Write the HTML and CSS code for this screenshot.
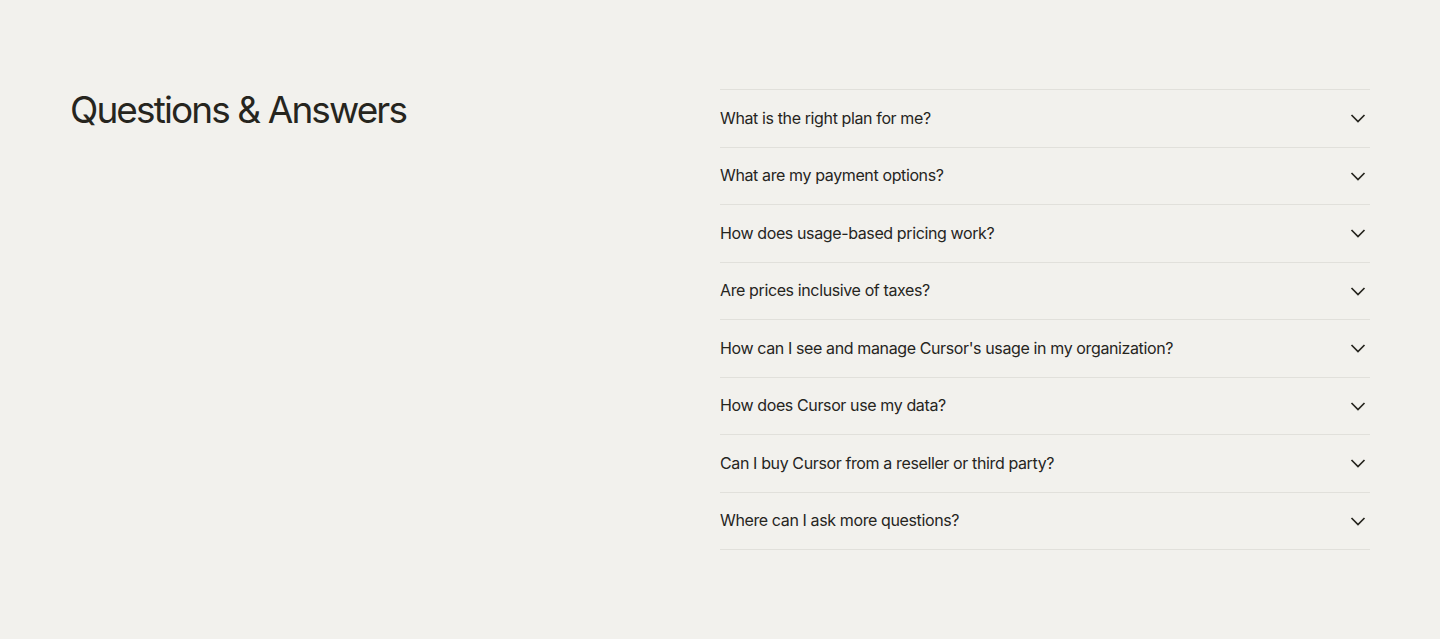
FILE: index.html
```html
<!DOCTYPE html>
<html lang="en">
<head>
<meta charset="utf-8">
<title>Questions &amp; Answers</title>
<link rel="stylesheet" href="styles.css">
</head>
<body>
<section class="faq">
  <h2 class="faq-title">Questions &amp; Answers</h2>
  <div class="faq-list">
    <div class="faq-item"><span class="faq-q">What is the right plan for me?</span><svg class="chev" viewBox="0 0 16 12" width="16" height="12"><path d="M1.5 3 L8 9.5 L14.5 3"/></svg></div>
    <div class="faq-item"><span class="faq-q">What are my payment options?</span><svg class="chev" viewBox="0 0 16 12" width="16" height="12"><path d="M1.5 3 L8 9.5 L14.5 3"/></svg></div>
    <div class="faq-item"><span class="faq-q">How does usage-based pricing work?</span><svg class="chev" viewBox="0 0 16 12" width="16" height="12"><path d="M1.5 3 L8 9.5 L14.5 3"/></svg></div>
    <div class="faq-item"><span class="faq-q">Are prices inclusive of taxes?</span><svg class="chev" viewBox="0 0 16 12" width="16" height="12"><path d="M1.5 3 L8 9.5 L14.5 3"/></svg></div>
    <div class="faq-item"><span class="faq-q">How can I see and manage Cursor's usage in my organization?</span><svg class="chev" viewBox="0 0 16 12" width="16" height="12"><path d="M1.5 3 L8 9.5 L14.5 3"/></svg></div>
    <div class="faq-item"><span class="faq-q">How does Cursor use my data?</span><svg class="chev" viewBox="0 0 16 12" width="16" height="12"><path d="M1.5 3 L8 9.5 L14.5 3"/></svg></div>
    <div class="faq-item"><span class="faq-q">Can I buy Cursor from a reseller or third party?</span><svg class="chev" viewBox="0 0 16 12" width="16" height="12"><path d="M1.5 3 L8 9.5 L14.5 3"/></svg></div>
    <div class="faq-item"><span class="faq-q">Where can I ask more questions?</span><svg class="chev" viewBox="0 0 16 12" width="16" height="12"><path d="M1.5 3 L8 9.5 L14.5 3"/></svg></div>
  </div>
</section>
</body>
</html>
```

FILE: styles.css
```css
html, body {
  margin: 0;
  padding: 0;
  background: #f2f1ed;
  color: #26251e;
  font-family: Inter, "Liberation Sans", sans-serif;
}

.faq {
  display: grid;
  grid-template-columns: 1fr 1fr;
  padding: 89px 70px 89px 70px;
}

.faq-title {
  margin: 0;
  font-size: 37px;
  font-weight: 400;
  letter-spacing: -1.9px;
  line-height: 42px;
}

.faq-list {
  border-bottom: 1px solid #e1e0db;
}

.faq-item {
  display: flex;
  align-items: center;
  justify-content: space-between;
  height: 56.5px;
  border-top: 1px solid #e1e0db;
}

.faq-q {
  font-size: 16px;
  letter-spacing: -0.38px;
  line-height: 24px;
  margin-top: -1px;
}

.chev {
  margin-right: 4px;
  fill: none;
  stroke: #26251e;
  stroke-width: 1.7;
}
```
